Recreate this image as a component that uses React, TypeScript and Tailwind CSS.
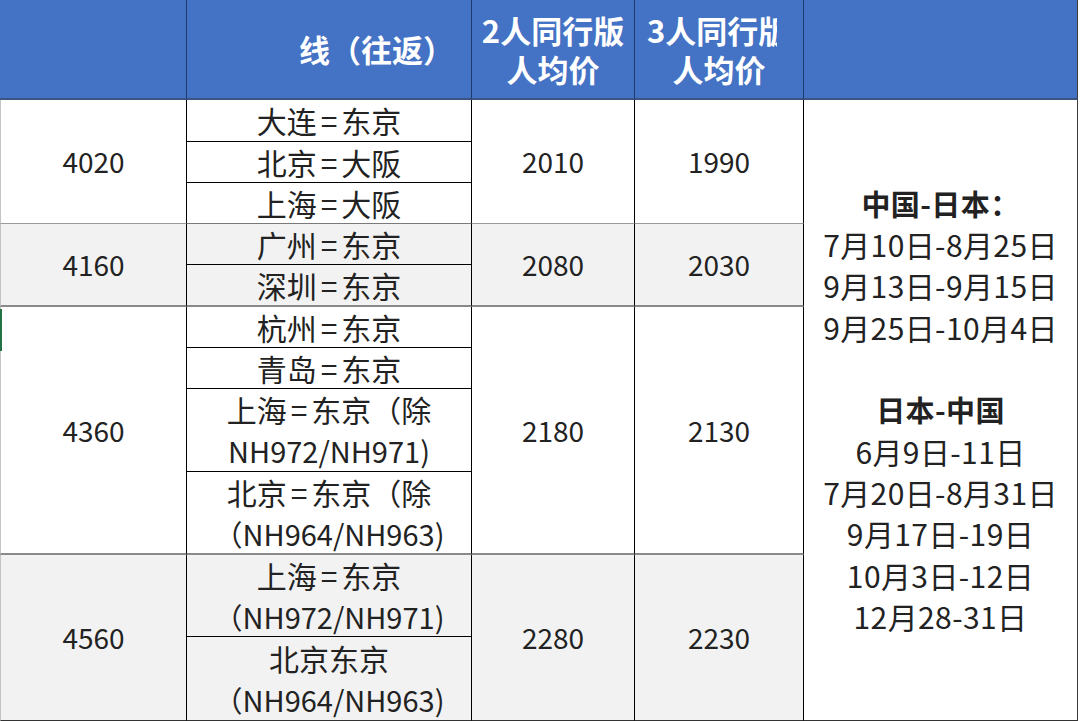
import React from "react";

const F = "font-['Noto_Sans_CJK_SC','Noto_Sans',sans-serif]";

function Eq() {
  return <span className="mx-[4px]">=</span>;
}

export default function App() {
  const hdr =
    "bg-[#4472c4] border-r border-r-[#1f3a6e] border-b-2 border-b-[#3b5480] text-white font-bold text-[31px] leading-[39px] flex flex-col items-center justify-center";
  const body =
    "flex flex-col items-center justify-center text-[#222] text-[30px] leading-[41px] border-r border-r-black whitespace-nowrap [text-spacing-trim:space-all]";
  const grp = "border-b-2 border-b-[#8a8a8a]";
  const sub = "border-b border-b-black";
  const gray = "bg-[#f2f2f2]";
  const last = "border-b border-b-[#333]";
  const c1 = "col-start-1 border-l border-l-[#c4c4c4]";
  const c2 = "col-start-2";
  const c3 = "col-start-3";
  const c4 = "col-start-4";
  const num = "!text-[28px]";
  const nh = "text-[29px]";

  return (
    <div className={`w-[1080px] h-[721px] bg-white overflow-hidden relative ${F}`}>
      <div className="grid grid-cols-[187px_285px_163px_169px_274px] grid-rows-[100px_42px_41px_41px_41px_42px_41px_41px_83px_83px_82px_84px]">
        {/* header */}
        <div className={`${hdr} col-start-1 row-start-1`} />
        <div className={`${hdr} col-start-2 row-start-1 !items-end pr-[17px]`}>
          <span className="leading-[40px]">线（往返）</span>
        </div>
        <div className={`${hdr} col-start-3 row-start-1`}>
          <span>2人同行版</span>
          <span>人均价</span>
        </div>
        <div className={`${hdr} col-start-4 row-start-1`}>
          <div className="self-start ml-[12px] w-[130px] overflow-hidden whitespace-nowrap">3人同行版</div>
          <span>人均价</span>
        </div>
        <div className={`${hdr} col-start-5 row-start-1 !border-r-[#3d3d3d]`} />

        {/* group 1 */}
        <div className={`${body} ${num} ${c1} row-start-2 row-span-3 border-b border-b-[#9a9a9a]`}>4020</div>
        <div className={`${body} ${c2} row-start-2 ${sub}`}><span>大连<Eq />东京</span></div>
        <div className={`${body} ${c2} row-start-3 ${sub}`}><span>北京<Eq />大阪</span></div>
        <div className={`${body} ${c2} row-start-4 border-b border-b-[#7a7a7a]`}><span>上海<Eq />大阪</span></div>
        <div className={`${body} ${num} ${c3} row-start-2 row-span-3 border-b border-b-[#9a9a9a]`}>2010</div>
        <div className={`${body} ${num} ${c4} row-start-2 row-span-3 border-b border-b-[#9a9a9a]`}>1990</div>

        {/* group 2 */}
        <div className={`${body} ${num} ${c1} ${gray} row-start-5 row-span-2 ${grp}`}>4160</div>
        <div className={`${body} ${c2} ${gray} row-start-5 ${sub}`}><span>广州<Eq />东京</span></div>
        <div className={`${body} ${c2} ${gray} row-start-6 ${grp}`}><span>深圳<Eq />东京</span></div>
        <div className={`${body} ${num} ${c3} ${gray} row-start-5 row-span-2 ${grp}`}>2080</div>
        <div className={`${body} ${num} ${c4} ${gray} row-start-5 row-span-2 ${grp}`}>2030</div>

        {/* group 3 */}
        <div className={`${body} ${num} ${c1} row-start-7 row-span-4 ${grp}`}>4360</div>
        <div className={`${body} ${c2} row-start-7 ${sub}`}><span>杭州<Eq />东京</span></div>
        <div className={`${body} ${c2} row-start-8 ${sub}`}><span>青岛<Eq />东京</span></div>
        <div className={`${body} ${c2} row-start-9 ${sub}`}>
          <span>上海<Eq />东京（除</span>
          <span className={nh}>NH972/NH971)</span>
        </div>
        <div className={`${body} ${c2} row-start-10 ${grp}`}>
          <span>北京<Eq />东京（除</span>
          <span className={nh}>（NH964/NH963)</span>
        </div>
        <div className={`${body} ${num} ${c3} row-start-7 row-span-4 ${grp}`}>2180</div>
        <div className={`${body} ${num} ${c4} row-start-7 row-span-4 ${grp}`}>2130</div>

        {/* group 4 */}
        <div className={`${body} ${num} ${c1} ${gray} row-start-11 row-span-2 ${last}`}>4560</div>
        <div className={`${body} ${c2} ${gray} row-start-11 ${sub}`}>
          <span>上海<Eq />东京</span>
          <span className={nh}>（NH972/NH971)</span>
        </div>
        <div className={`${body} ${c2} ${gray} row-start-12 ${last}`}>
          <span>北京东京</span>
          <span className={nh}>（NH964/NH963)</span>
        </div>
        <div className={`${body} ${num} ${c3} ${gray} row-start-11 row-span-2 ${last}`}>2280</div>
        <div className={`${body} ${num} ${c4} ${gray} row-start-11 row-span-2 ${last}`}>2230</div>

        {/* col 5 */}
        <div className={`${body} col-start-5 row-start-2 row-span-11 ${last} !border-r-[#3d3d3d] !leading-[41.3px] text-[#1e1e1e] tracking-[0.4px]`}>
          <span className="font-bold text-[29px]">中国-日本：</span>
          <span>7月10日-8月25日</span>
          <span>9月13日-9月15日</span>
          <span>9月25日-10月4日</span>
          <span>&nbsp;</span>
          <span className="font-bold text-[29px]">日本-中国</span>
          <span>6月9日-11日</span>
          <span>7月20日-8月31日</span>
          <span>9月17日-19日</span>
          <span>10月3日-12日</span>
          <span>12月28-31日</span>
        </div>
      </div>
      <div className="absolute left-0 top-[309px] w-[2px] h-[42px] bg-[#217346]" />
    </div>
  );
}
